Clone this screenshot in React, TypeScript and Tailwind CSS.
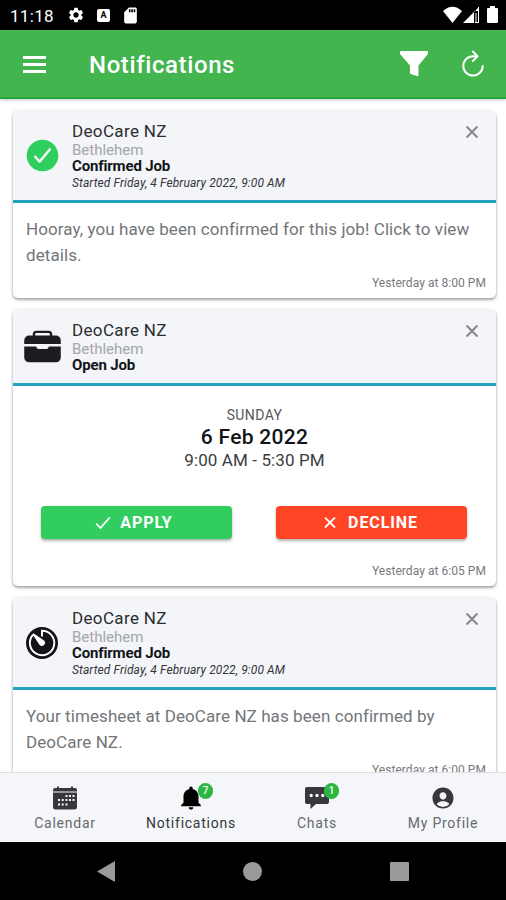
import React from 'react';
import {
  IoBriefcase,
  IoCheckmarkCircle,
  IoCheckmarkSharp,
  IoCloseSharp,
  IoPersonCircle
} from 'react-icons/io5';
import { IoMdNotifications } from 'react-icons/io';
import { MdSettings, MdSdCard } from 'react-icons/md';

type IconProps = { className?: string };

function TimerIcon({ className }: IconProps) {
  return (
    <svg viewBox="0 0 32 32" className={className}>
      <circle cx="16" cy="16" r="16" fill="#121417" />
      <path d="M6.700 8.200A12.200 12.200 0 1 0 16 3.800v5" fill="none" stroke="#fff" strokeWidth="1.9" strokeLinecap="round" />
      <path d="M13.600 18 6.600 7.600q0-1.300 1.200-1.200L18 13.600a3 3 0 0 1-4.400 4.400z" fill="#fff" />
    </svg>
  );
}

function CalendarIcon({ className }: IconProps) {
  return (
    <svg viewBox="0 0 26 26" className={className} fill="currentColor">
      <path d="M1 6.500V5q0-2 2-2h2V1.500h2V3h12V1.500h2V3h2q2 0 2 2v1.500z" />
      <path
        fillRule="evenodd"
        d="M1 7.500h24V22q0 2.500-2.500 2.500h-19Q1 24.500 1 22zM13.500 10h2v2h-2zm3.500 0h2v2h-2zm3.500 0h2v2h-2zM6 14h2v2H6zm3.700 0h2v2h-2zm3.800 0h2v2h-2zm3.500 0h2v2h-2zm3.500 0h2v2h-2zM6 18.500h2v2H6zm3.700 0h2v2h-2zm3.800 0h2v2h-2z"
      />
    </svg>
  );
}

function ChatIcon({ className }: IconProps) {
  return (
    <svg viewBox="0 0 26 26" className={className} fill="currentColor">
      <path
        fillRule="evenodd"
        d="M3 2h20q2 0 2 2v13q0 2-2 2H12l-5.500 5V19H3q-2 0-2-2V4q0-2 2-2zM5.500 10.500a1.700 1.700 0 1 0 3.400 0 1.700 1.700 0 1 0-3.400 0zm5.800 0a1.700 1.700 0 1 0 3.400 0 1.700 1.700 0 1 0-3.400 0zm5.800 0a1.700 1.700 0 1 0 3.400 0 1.700 1.700 0 1 0-3.400 0z"
      />
    </svg>
  );
}

function StatusBar() {
  return (
    <div className="flex h-[30px] shrink-0 items-center bg-black pl-[10px] pr-[8px] text-white">
      <span className="w-[57px] pt-[2px] text-[17px] leading-none tracking-[0.3px]">11:18</span>
      <MdSettings className="h-[18px] w-[18px]" />
      <div className="ml-[12px] flex h-[13px] w-[13px] items-center justify-center rounded-[2px] bg-white text-[9px] leading-none font-bold text-black">A</div>
      <MdSdCard className="ml-[11px] h-[19px] w-[19px]" />
      <svg viewBox="0 0 55 18" className="ml-auto h-[18px] w-[55px]" fill="#fff">
        <path d="M0 5Q9.500-3.500 19 5L9.500 17z" />
        <path d="M20 17 36 1v4h-5v12z" />
        <path d="M32.500 7h1v10h-1zM35 1h1v16h-4v-1h3z" />
        <path d="M44 3q0-1 1-1h2V0h5v2h2q1 0 1 1v13q0 1-1 1h-9q-1 0-1-1z" />
      </svg>
    </div>
  );
}

function Header() {
  return (
    <header className="z-10 flex h-[69px] shrink-0 items-center border-b-2 border-[#24a83b] bg-[#42b54f] pr-[22px] pl-[23px] text-white shadow-[0_1px_3px_rgba(0,0,0,0.25)]">
      <div className="mt-[1px] flex w-[23px] flex-col gap-[4px]">
        <div className="h-[3px] bg-white" />
        <div className="h-[3px] bg-white" />
        <div className="h-[3px] bg-white" />
      </div>
      <h1 className="ml-[43px] pt-[2px] text-[24px] leading-none font-medium tracking-[0.6px]">Notifications</h1>
      <svg viewBox="0 0 28 26" className="ml-auto h-[26px] w-[28px]" fill="#fff">
        <path d="M1 0h26q1 0 1 1v2L18.500 14.500V24q0 1.500-1.500 1L10.500 23q-.5-.2-.5-1v-7.500L0 3V1q0-1 1-1z" />
      </svg>
      <svg viewBox="0 0 22 27" className="ml-[34px] h-[27px] w-[22px]" fill="none" stroke="#fff" strokeWidth="2">
        <path d="M15 6.200H11a9.700 9.700 0 1 0 9.700 9.700" strokeLinecap="round" />
        <path d="m10.800 1.500 4.700 4.700L10.800 11" strokeLinecap="round" strokeLinejoin="round" />
      </svg>
    </header>
  );
}

type CardProps = {
  icon: React.ReactNode;
  status: string;
  started?: string;
  time: string;
  className: string;
  children: React.ReactNode;
};

function Card({ icon, status, started, time, className, children }: CardProps) {
  return (
    <article className={`flex shrink-0 flex-col overflow-hidden rounded-[5px] bg-white shadow-[0_2px_3px_rgba(0,0,0,0.32),0_0_3px_rgba(0,0,0,0.12)] ${className}`}>
      <div className={`flex shrink-0 border-b-[3px] border-[#24a3bd] bg-[#f3f5f9] ${started ? 'h-[92px]' : 'h-[76px]'}`}>
        <div className="flex w-[59px] shrink-0 items-center justify-center pr-[1px]">{icon}</div>
        <div className="flex-1 pt-[10px]">
          <h2 className="text-[17px] leading-[21px] tracking-[0.35px] text-[#2b2d31]">DeoCare NZ</h2>
          <p className="text-[15px] leading-[16px] text-[#a3a5ab]">Bethlehem</p>
          <p className="text-[15px] leading-[16px] font-bold tracking-[-0.15px] text-[#121417]">{status}</p>
          {started && <p className="text-[12px] leading-[18px] tracking-[0.1px] text-[#33353a] italic">{started}</p>}
        </div>
        <IoCloseSharp className="mt-[10px] mr-[13px] h-[22px] w-[22px] text-[#88898d]" />
      </div>
      {children}
      <p className="mt-auto pr-[10px] pb-[8px] text-right text-[12px] leading-[14px] tracking-[0.05px] text-[#77797d]">{time}</p>
    </article>
  );
}

const tabs = [
  { label: 'Calendar', icon: CalendarIcon, badge: '' },
  { label: 'Notifications', icon: IoMdNotifications, badge: '7', active: true },
  { label: 'Chats', icon: ChatIcon, badge: '1' },
  { label: 'My Profile', icon: IoPersonCircle, badge: '' }
];

function TabBar() {
  return (
    <nav className="z-10 flex h-[70px] shrink-0 border-t border-[#dddfe3] bg-[#f4f6fa] pl-[2px]">
      {tabs.map((tab) => (
        <div
          key={tab.label}
          className={`flex flex-1 flex-col items-center pt-[12px] ${tab.active ? 'text-black' : 'text-[#36383c]'}`}
        >
          <div className="relative">
            <tab.icon className={tab.active ? 'h-[26px] w-[26px] scale-110' : 'h-[26px] w-[26px]'} />
            {tab.badge && (
              <span className="absolute -top-[2px] left-[20px] flex h-[16px] w-[15px] items-center justify-center rounded-full bg-[#2db742] text-[10px] leading-none font-medium text-white">
                {tab.badge}
              </span>
            )}
          </div>
          <span className={`mt-[3px] text-[14px] leading-[18px] tracking-[0.75px] ${tab.active ? 'text-[#34363a]' : 'text-[#686a6e]'}`}>{tab.label}</span>
        </div>
      ))}
    </nav>
  );
}

function SystemNav() {
  return (
    <div className="flex h-[58px] shrink-0 items-center justify-between bg-black pr-[97px] pl-[97px]">
      <svg viewBox="0 0 18 21" className="h-[21px] w-[18px]" fill="#999">
        <path d="M0 10.500 18 0v21z" />
      </svg>
      <div className="h-[19px] w-[19px] rounded-full bg-[#999]" />
      <div className="h-[19px] w-[19px] rounded-[1px] bg-[#999]" />
    </div>
  );
}

export default function App() {
  return (
    <div className="flex h-[900px] w-[506px] flex-col overflow-hidden bg-white font-[Roboto,sans-serif]">
      <StatusBar />
      <Header />
      <main className="flex min-h-0 flex-1 flex-col gap-[12px] overflow-hidden pt-[12px] pr-[10px] pl-[13px]">
        <Card
          icon={<IoCheckmarkCircle className="h-[39px] w-[39px] text-[#2fcf5f]" />}
          status="Confirmed Job"
          started="Started Friday, 4 February 2022, 9:00 AM"
          time="Yesterday at 8:00 PM"
          className="h-[187px]"
        >
          <p className="px-[13px] pt-[13px] text-[17px] leading-[26px] tracking-[0.08px] text-[#737579]">
            Hooray, you have been confirmed for this job! Click to view details.
          </p>
        </Card>
        <Card
          icon={<IoBriefcase className="h-[39px] w-[39px] text-[#1b1d21]" />}
          status="Open Job"
          time="Yesterday at 6:05 PM"
          className="h-[276px]"
        >
          <div className="pt-[20px] text-center">
            <p className="text-[14px] leading-[18px] tracking-[0.4px] text-[#55575b]">SUNDAY</p>
            <p className="text-[21px] leading-[26px] font-medium tracking-[0.3px] text-[#121417]">6 Feb 2022</p>
            <p className="-mt-[1px] text-[17px] leading-[22px] tracking-[0.1px] text-[#3b3d41]">9:00 AM - 5:30 PM</p>
          </div>
          <div className="mt-[35px] flex justify-between pr-[29px] pl-[28px] text-[16px] font-bold tracking-[0.9px] text-white">
            <button className="flex h-[33px] w-[191px] items-center justify-center gap-[7px] rounded-[4px] bg-[#31ce5f] pr-[7px] shadow-[0_2px_3px_rgba(0,0,0,0.3)]">
              <IoCheckmarkSharp className="h-[20px] w-[20px]" />
              APPLY
            </button>
            <button className="flex h-[33px] w-[191px] items-center justify-center gap-[8px] rounded-[4px] bg-[#ff4524] pr-[5px] shadow-[0_2px_3px_rgba(0,0,0,0.3)]">
              <IoCloseSharp className="h-[21px] w-[20px]" />
              DECLINE
            </button>
          </div>
        </Card>
        <Card
          icon={<TimerIcon className="h-[32px] w-[32px]" />}
          status="Confirmed Job"
          started="Started Friday, 4 February 2022, 9:00 AM"
          time="Yesterday at 6:00 PM"
          className="h-[187px]"
        >
          <p className="px-[13px] pt-[13px] text-[17px] leading-[26px] tracking-[0.08px] text-[#737579]">
            Your timesheet at DeoCare NZ has been confirmed by DeoCare NZ.
          </p>
        </Card>
      </main>
      <TabBar />
      <SystemNav />
    </div>
  );
}
